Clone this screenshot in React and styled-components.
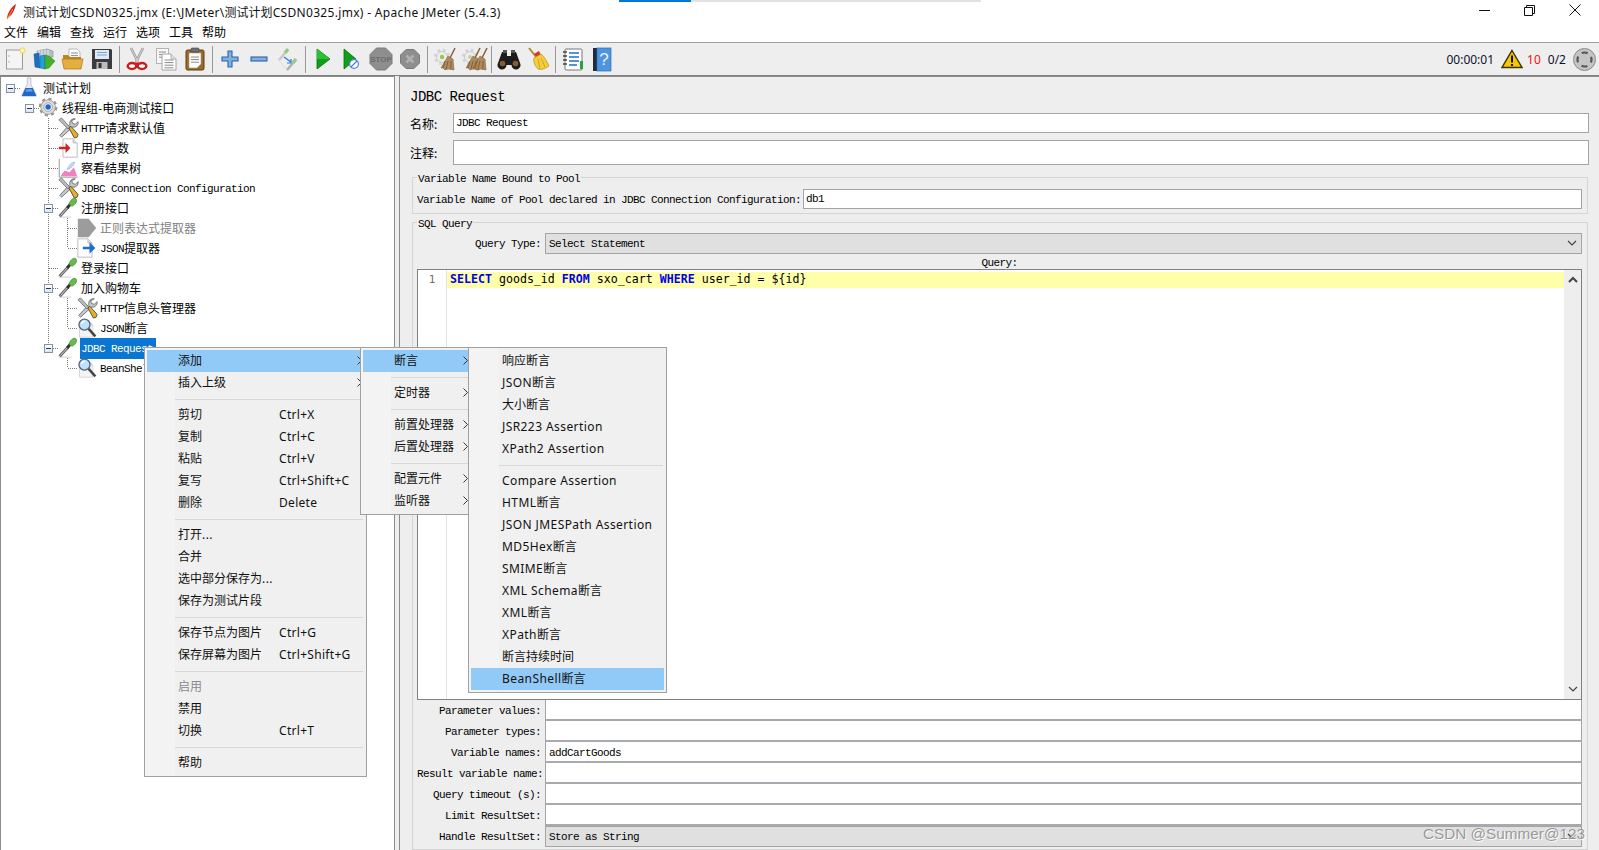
import styled, { createGlobalStyle } from 'styled-components';

const Global = createGlobalStyle`
  html, body { margin: 0; padding: 0; height: 100%; overflow: hidden; background: #fff; }
  body { font-family: "Noto Sans", "Noto Sans CJK SC", sans-serif; font-size: 12px; color: #000; }
`;

const cjk = '"Noto Sans CJK SC", "Noto Sans", sans-serif';
const ui = '"Noto Sans", "Noto Sans CJK SC", sans-serif';

const Window = styled.div`
  position: relative;
  width: 100%;
  height: 100vh;
  display: flex;
  flex-direction: column;
  overflow: hidden;
`;

const Progress = styled.div`
  position: absolute;
  left: 619px;
  top: 0;
  width: 362px;
  height: 2px;
  background: linear-gradient(to right, #0078d7 72px, #e2e2e2 72px);
`;

const TitleBar = styled.div`
  height: 21px;
  display: flex;
  align-items: center;
  padding: 2px 0 0 4px;
  box-sizing: border-box;
  font-family: ${ui};
  font-size: 12px;
  gap: 3px;
  color: #111;
`;

const WinButtons = styled.div`
  margin-left: auto;
  display: flex;
  align-items: center;
  gap: 34px;
  padding: 0 18px 3px 0;
`;

const MenuBar = styled.div`
  height: 21px;
  display: flex;
  align-items: center;
  gap: 9px;
  padding-left: 4px;
  font-family: ${cjk};
  font-size: 12px;
`;

const ToolBar = styled.div`
  height: 34px;
  box-sizing: border-box;
  display: flex;
  align-items: center;
  background: #eeeeee;
  border-top: 1px solid #a0a0a0;
  border-bottom: 1px solid #808080;
  font-family: ${ui};
`;

const ToolGroup = styled.div`
  display: flex;
  align-items: center;
  flex: none;
`;

const Tool = styled.span`
  width: 29px;
  height: 30px;
  display: flex;
  align-items: center;
  justify-content: center;
  flex: none;
`;

const ToolSep = styled.span`
  width: 1px;
  height: 27px;
  margin: 0 2.5px;
  background: #999;
  flex: none;
`;

const Status = styled.div`
  margin-left: auto;
  display: flex;
  align-items: center;
  padding-right: 3px;
  font-size: 12px;
  color: #101030;
`;

const Time = styled.span`
  margin-right: 7px;
`;

const ErrorCount = styled.span`
  color: #ee1111;
  margin: 0 7px 0 4px;
`;

const Threads = styled.span`
  margin-right: 7px;
`;

const Main = styled.div`
  flex: 1;
  display: flex;
  min-height: 0;
  background: #eeeeee;
`;

const TreePane = styled.div`
  width: 395px;
  flex: none;
  box-sizing: border-box;
  background: #fff;
  border: 1px solid #8c8c8c;
  border-bottom: none;
  padding-top: 1px;
`;

const Row = styled.div`
  height: 20px;
  display: flex;
  align-items: stretch;
`;

const dots = (dir, size, pos) =>
  `repeating-linear-gradient(${dir}, #777 0 1px, transparent 1px 2px) ${pos} / ${size} no-repeat`;

const guideBg = {
  none: 'none',
  line: dots('to bottom', '1px 100%', '9px 0'),
  tee: `${dots('to bottom', '1px 100%', '9px 0')}, ${dots('to right', '10px 1px', '10px 10px')}`,
  ell: `${dots('to bottom', '1px 10px', '9px 0')}, ${dots('to right', '10px 1px', '10px 10px')}`,
  top: dots('to right', '10px 1px', '10px 10px'),
  open: `${dots('to bottom', '1px 100%', '9px 0')}, ${dots('to right', '10px 1px', '10px 10px')}`,
};

const Guide = styled.span`
  width: 19px;
  flex: none;
  display: flex;
  align-items: center;
  justify-content: center;
  background: ${(p) => guideBg[p.$kind]};
`;

const Toggle = styled.span`
  width: 9px;
  height: 9px;
  box-sizing: border-box;
  border: 1px solid #8593a8;
  background:
    linear-gradient(#1f3a66, #1f3a66) center / 5px 1px no-repeat,
    linear-gradient(#fff, #dfe3ea);
`;

const NodeIcon = styled.span`
  width: 19px;
  flex: none;
  display: flex;
  align-items: center;
  justify-content: center;
`;

const NodeLabel = styled.span`
  margin-left: 3px;
  padding: 0 1px;
  height: 21px;
  line-height: 20px;
  font-family: ${cjk};
  font-size: 12px;
  white-space: nowrap;
  color: ${(p) => (p.$selected ? '#fff' : p.$disabled ? '#808080' : '#000')};
  background: ${(p) => (p.$selected ? '#0a76d2' : 'transparent')};
  min-width: ${(p) => (p.$selected ? '74px' : '0')};
`;

// narrow bitmap look of the Swing latin font, always 6px per char
const Sim = styled.span`
  font-family: "Liberation Mono", monospace;
  font-size: 11px;
  letter-spacing: -0.6px;
`;

const TreeSim = styled(Sim)`
  vertical-align: 1px;
`;

// the menu latin runs wider than Noto Sans
const WideLatin = styled.span`
  letter-spacing: ${(p) => p.$ls}px;
`;

const Panel = styled.div`
  flex: 1;
  min-width: 0;
  margin-left: 4px;
  box-sizing: border-box;
  border-left: 1px solid #8c8c8c;
  border-top: 1px solid #8c8c8c;
  padding: 0 10px 0 10px;
  display: flex;
  flex-direction: column;
`;

const PanelTitle = styled.div`
  height: 36px;
  padding-top: 10px;
  box-sizing: border-box;
  font-family: "Liberation Mono", monospace;
  font-size: 14px;
  letter-spacing: -0.48px;
  line-height: 20px;
`;

const NameRow = styled.div`
  display: flex;
  align-items: center;
  height: ${(p) => p.$h}px;
  margin-bottom: ${(p) => p.$mb}px;
`;

const NameLabel = styled.span`
  width: 43px;
  flex: none;
  font-family: ${cjk};
  font-size: 12px;
`;

const Field = styled.div`
  flex: 1;
  height: 100%;
  box-sizing: border-box;
  background: #fff;
  border: 1px solid #a4a4a4;
  padding: 0 2px;
  display: flex;
  align-items: center;
  min-width: 0;
`;

const Group = styled.fieldset`
  margin: ${(p) => p.$mt}px 1px 0 2px;
  padding: ${(p) => p.$pt}px 5px ${(p) => p.$pb}px 4px;
  border: 1px solid #d4d4d4;
  min-width: 0;
  display: flex;
  flex-direction: column;
  flex: ${(p) => (p.$grow ? '1' : 'none')};
  min-height: 0;
`;

const Legend = styled.legend`
  margin-left: 0;
  padding: 2px 1px 0;
  height: 16px;
  box-sizing: border-box;
  line-height: 14px;
`;

const PoolRow = styled.div`
  display: flex;
  align-items: center;
  height: 20px;
`;

const PoolLabel = styled.span`
  width: 386px;
  flex: none;
  white-space: nowrap;
  padding-bottom: 2px;
`;

const FormRow = styled.div`
  display: flex;
  height: 21px;
  flex: none;
`;

const FormLabel = styled.span`
  width: 128px;
  flex: none;
  box-sizing: border-box;
  padding-right: 4px;
  text-align: right;
  line-height: 19px;
  white-space: nowrap;
`;

const FormField = styled.div`
  flex: 1;
  box-sizing: border-box;
  background: #fff;
  border-left: 1px solid #a4a4a4;
  border-right: 1px solid #a4a4a4;
  border-bottom: 2px solid #a9a9b0;
  padding-left: 3px;
  line-height: 19px;
`;

const Combo = styled.div`
  flex: 1;
  box-sizing: border-box;
  background: #e0e0e0;
  border: 1px solid #a4a4a4;
  padding: 0 4px 0 3px;
  display: flex;
  align-items: center;
  justify-content: space-between;
`;

const QueryCaption = styled.div`
  height: 15px;
  flex: none;
  line-height: 15px;
  text-align: center;
`;

const Editor = styled.div`
  flex: 1;
  min-height: 0;
  display: flex;
  background: #fff;
  border: 1px solid #808080;
`;

const Gutter = styled.div`
  width: 29px;
  flex: none;
  box-sizing: border-box;
  border-right: 1px solid #e4e4e4;
  padding: 2px 0 0 0;
  text-align: center;
  font-family: "DejaVu Sans Mono", monospace;
  font-size: 11px;
  line-height: 16px;
  color: #7a6a60;
`;

const CodeArea = styled.div`
  flex: 1;
  min-width: 0;
  padding-top: 2px;
`;

const CodeLine = styled.div`
  height: 16px;
  background: #ffffaa;
  padding-left: 3px;
  font-family: "DejaVu Sans Mono", monospace;
  font-size: 11.62px;
  line-height: 15px;
  white-space: pre;
`;

const Keyword = styled.span`
  color: #0000ee;
  font-weight: bold;
`;

const ScrollBar = styled.div`
  width: 17px;
  flex: none;
  background: #eeeeee;
  display: flex;
  flex-direction: column;
  align-items: center;
  justify-content: space-between;
  padding: 6px 0;
  box-sizing: border-box;
`;

const Popup = styled.div`
  position: absolute;
  left: ${(p) => p.$left}px;
  top: 347px;
  width: ${(p) => p.$width}px;
  box-sizing: border-box;
  padding: 2px;
  border: 1px solid #a0a0a0;
  background: linear-gradient(to right, #f3f3f3 30px, #f0f0f0 30px);
  font-family: ${ui};
  font-size: 12px;
  color: #111;
`;

const Item = styled.div`
  height: 22px;
  box-sizing: border-box;
  padding: 0 ${(p) => p.$pr || 3}px 2px 31px;
  display: flex;
  align-items: center;
  background: ${(p) => (p.$active ? '#91c9f7' : 'transparent')};
  color: ${(p) => (p.$disabled ? '#8a8a8a' : 'inherit')};
  white-space: nowrap;
`;

const ItemText = styled.span`
  width: ${(p) => (p.$col ? `${p.$col}px` : 'auto')};
  flex: none;
`;

const Chevron = styled.svg`
  margin-left: auto;
  flex: none;
`;

const Separator = styled.div`
  height: 10px;
  margin: 0 1px 0 28px;
  background: linear-gradient(#d8d8d8, #d8d8d8) center / 100% 1px no-repeat;
`;

const Watermark = styled.div`
  position: absolute;
  left: 1423px;
  top: 825px;
  font-family: "Liberation Sans", sans-serif;
  font-size: 15.3px;
  line-height: 18px;
  color: rgba(125, 125, 125, 0.75);
  text-shadow: 1px 1px 0 rgba(255, 255, 255, 0.9);
  white-space: nowrap;
`;

const IconSvg = styled.svg`
  display: block;
  overflow: visible;
`;

const S = ({ children, w = 24, h = 24, box = '0 0 24 24' }) => (
  <IconSvg width={w} height={h} viewBox={box}>{children}</IconSvg>
);

const Page = ({ x = 4, y = 2, w = 16, h = 20, fold = 5, fill = '#fff', stroke = '#aaa' }) => (
  <g>
    <path d={`M${x} ${y}h${w - fold}l${fold} ${fold}v${h - fold}h-${w}z`} fill={fill} stroke={stroke} strokeWidth="0.9" />
    <path d={`M${x + w - fold} ${y}v${fold}h${fold}`} fill="#ddd" stroke={stroke} strokeWidth="0.7" />
  </g>
);

const DocLines = ({ x, y, w, n, step = 2.6 }) => (
  <g stroke="#8a8a8a" strokeWidth="1">
    {Array.from({ length: n }, (_, i) => (
      <line key={i} x1={x} x2={x + w} y1={y + i * step} y2={y + i * step} />
    ))}
  </g>
);

const gearTeeth = (cx, cy, r, col, w = 3.4) => (
  <g>
    <circle cx={cx} cy={cy} r={r} fill="none" stroke={col} strokeWidth={w} strokeDasharray={`${(2 * Math.PI * r) / 16} ${(2 * Math.PI * r) / 16}`} />
    <circle cx={cx} cy={cy} r={r - 1} fill="#ececec" stroke="#c4c4c4" strokeWidth="0.8" />
  </g>
);

const Broom = ({ dx = 0, straw = '#b08a5e' }) => (
  <g transform={`translate(${dx} 0)`}>
    <line x1="20" y1="1" x2="15" y2="11" stroke="#8a6238" strokeWidth="1.5" />
    <path d="M13 9l5 3 1 11-6-1-3 1-2-2-2 0z" fill={straw} stroke="#7a5630" strokeWidth="0.5" />
    <path d="M10 14l-2 7M13 14l-2 8M16 14l0 8" stroke="#6e4d2b" strokeWidth="0.7" />
  </g>
);

const toolIcons = {
  newDoc: (
    <S>
      <rect x="3.5" y="3" width="16" height="19" fill="#f4f4f4" stroke="#9a9a9a" />
      <circle cx="6" cy="9" r=".7" fill="#999" /><circle cx="6" cy="15" r=".7" fill="#999" />
      <circle cx="19.5" cy="3.5" r="2.6" fill="#fff7b0" stroke="#f0d24a" />
    </S>
  ),
  templates: (
    <S>
      <path d="M5 4l10-2 6 2v6l-14 2z" fill="#b4bcc4" stroke="#7f8a94" strokeWidth=".6" />
      <path d="M7 3v9M10 3v9M13 2.5v9M16 3v8" stroke="#eef" strokeWidth="1" />
      <path d="M2 7l5-1 1 15-5-1z" fill="#1a6fc4" stroke="#0d4c8f" strokeWidth=".5" />
      <path d="M8 9l5-1v14l-5-1z" fill="#24a0d8" stroke="#0d6c9f" strokeWidth=".5" />
      <path d="M13 8l4 1 6 5-6 7-4 1z" fill="#46b02e" stroke="#2a8018" strokeWidth=".5" />
    </S>
  ),
  open: (
    <S>
      <path d="M8 2h8l3 3v9H8z" fill="#fff" stroke="#aaa" strokeWidth=".8" />
      <DocLines x={10} y={6} w={7} n={3} />
      <path d="M2 8h5l2 2h11v5H2z" fill="#b8871f" />
      <path d="M1 12h21l-2 10H3z" fill="#e6ae3c" stroke="#a87a1c" strokeWidth=".7" />
    </S>
  ),
  save: (
    <S>
      <path d="M2 2h19l1 1v19H2z" fill="#3c3c40" />
      <rect x="5" y="3" width="14" height="9" fill="#dfe9f5" />
      <path d="M7 5.5h10M7 8h10" stroke="#7fa4cf" strokeWidth="1" />
      <rect x="6.5" y="15" width="11" height="7" fill="#bdbdbd" />
      <rect x="8.5" y="16" width="3" height="5" fill="#333" />
    </S>
  ),
  cut: (
    <S>
      <path d="M6 1l7 14M18 1l-7 14" stroke="#9a9a9a" strokeWidth="2.6" />
      <path d="M6 1l7 14M18 1l-7 14" stroke="#dcdcdc" strokeWidth=".9" />
      <ellipse cx="7" cy="19" rx="4.3" ry="3" fill="#fff" stroke="#cf1b1b" strokeWidth="2.4" />
      <ellipse cx="17" cy="19" rx="4.3" ry="3" fill="#fff" stroke="#cf1b1b" strokeWidth="2.4" />
      <path d="M10 16.5l4 0" stroke="#cf1b1b" strokeWidth="2" />
    </S>
  ),
  copy: (
    <S>
      <rect x="2.5" y="1.5" width="12" height="15" fill="#f8f8f8" stroke="#b4b4b4" />
      <DocLines x={5} y={5} w={7} n={3} />
      <path d="M8 7h9l5 5v11H8z" fill="#fff" stroke="#a4a4a4" />
      <path d="M17 7v5h5" fill="#e2e2e2" stroke="#a4a4a4" strokeWidth=".8" />
      <DocLines x={10.5} y={13} w={9} n={4} />
    </S>
  ),
  paste: (
    <S>
      <rect x="3" y="3" width="18" height="20" rx="1.5" fill="#a06a24" stroke="#5f3e12" />
      <path d="M6 6h12v11l-4 4H6z" fill="#fff" stroke="#999" strokeWidth=".6" />
      <rect x="8" y="1" width="8" height="4" rx="1" fill="#6f7074" stroke="#444" strokeWidth=".6" />
      <DocLines x={8} y={10} w={8} n={3} />
    </S>
  ),
  plus: (
    <S>
      <path d="M10 4h4v6h6v4h-6v6h-4v-6H4v-4h6z" fill="#7fb0df" stroke="#2a65a8" strokeWidth="1.1" />
    </S>
  ),
  minus: (
    <S>
      <rect x="4" y="10" width="16" height="4" fill="#7fb0df" stroke="#2a65a8" strokeWidth="1.1" />
    </S>
  ),
  toggle: (
    <S>
      <path d="M3 13l6-7" stroke="#c8c8c8" strokeWidth="2.4" />
      <path d="M9 6l3-4" stroke="#96c88c" strokeWidth="3.4" />
      <path d="M11 23l6-7" stroke="#b0b0b0" strokeWidth="2.4" />
      <path d="M17 16l3-4" stroke="#96c88c" strokeWidth="3.4" />
      <path d="M8 10l7 5" stroke="#2c7fd4" strokeWidth="1.4" />
      <path d="M15 12v4h-4" fill="none" stroke="#2c7fd4" strokeWidth="1.2" />
      <path d="M3 14l7 7" stroke="#ddd" strokeWidth="1" />
    </S>
  ),
  play: (
    <S>
      <path d="M6 2l13 10L6 22z" fill="#10a018" stroke="#0a7010" strokeWidth=".8" />
      <path d="M6 2l13 10H6z" fill="#2cc034" />
    </S>
  ),
  playNoTimer: (
    <S>
      <path d="M4 2l12 10L4 22z" fill="#10a018" stroke="#0a7010" strokeWidth=".8" />
      <circle cx="14" cy="17" r="4.4" fill="#fff" stroke="#4f7fd8" strokeWidth="1.2" />
      <path d="M11 20l6-6" stroke="#4f7fd8" strokeWidth="1.2" />
    </S>
  ),
  stop: (
    <S>
      <path d="M7.5 1h9L23 7.5v9L16.5 23h-9L1 16.5v-9z" fill="#8e8e8e" stroke="#7a7a7a" />
      <text x="12" y="15" textAnchor="middle" fontFamily="Liberation Sans" fontWeight="bold" fontSize="8" fill="#6c6c6c">STOP</text>
    </S>
  ),
  shutdown: (
    <S>
      <path d="M8 2.5h8L21.5 8v8L16 21.5H8L2.5 16V8z" fill="#8e8e8e" stroke="#7a7a7a" />
      <path d="M8.5 8.5l7 7M15.5 8.5l-7 7" stroke="#b0b0b0" strokeWidth="2.6" />
    </S>
  ),
  clear: (
    <S>
      {gearTeeth(9, 10, 6.5, '#d4d4d4')}
      <circle cx="9" cy="10" r="2.2" fill="#9cc84a" />
      <Broom dx={2} />
    </S>
  ),
  clearAll: (
    <S>
      {gearTeeth(8, 10, 6.5, '#d4d4d4')}
      <circle cx="8" cy="10" r="2" fill="#c4d4a0" />
      <Broom dx={-2} />
      <Broom dx={5} />
    </S>
  ),
  search: (
    <S>
      <path d="M5 5h5v4h4V5h5l4 11a4.5 4.5 0 1 1-8.5 2h-5A4.5 4.5 0 1 1 1 16z" fill="#1c1c1c" />
      <circle cx="5.5" cy="16.5" r="2.8" fill="#8a5a30" /><circle cx="18.5" cy="16.5" r="2.8" fill="#8a5a30" />
      <rect x="6" y="3" width="4" height="3" fill="#555" /><rect x="14" y="3" width="4" height="3" fill="#555" />
    </S>
  ),
  broom: (
    <S>
      <path d="M3 1l8 10" stroke="#b08a2c" strokeWidth="2" />
      <path d="M8 7l5-3 2 4-4 3z" fill="#d8382c" />
      <path d="M8 11l7-4c4 3 6 8 8 12-4 3-8 4-11 3-3-3-5-7-4-11z" fill="#f4cc3c" stroke="#b8901c" strokeWidth=".7" />
      <path d="M12 12l2 10M15 11l4 9" stroke="#c09a20" strokeWidth=".8" />
    </S>
  ),
  list: (
    <S>
      <rect x="4" y="2" width="17" height="21" rx="1" fill="#fff" stroke="#777" />
      <path d="M8 6h10M8 10h10M8 14h10M8 18h8" stroke="#1c6fd0" strokeWidth="1.6" />
      <path d="M2 5h4M2 9h4M2 13h4M2 17h4" stroke="#444" strokeWidth="1.3" />
      <rect x="19" y="14" width="3" height="8" fill="#2ea040" />
    </S>
  ),
  help: (
    <S>
      <rect x="3" y="1" width="6" height="23" fill="#1f2c3c" />
      <rect x="7" y="1" width="14" height="23" fill="#4f94e0" stroke="#2f6db0" strokeWidth=".7" />
      <text x="14" y="18" textAnchor="middle" fontFamily="Liberation Sans" fontSize="17" fill="#e8f2ff">?</text>
    </S>
  ),
};

const Dropper = () => (
  <S w={20} h={20}>
    <path d="M1 23l15 0" stroke="#e4e4e4" strokeWidth="2" />
    <path d="M2 22L12 11" stroke="#6a6a6a" strokeWidth="3.6" />
    <path d="M3 21l8-9" stroke="#d4d4d4" strokeWidth="1.1" />
    <path d="M11 12l5-6" stroke="#333" strokeWidth="3.4" />
    <ellipse cx="18" cy="5" rx="3.4" ry="5.4" transform="rotate(40 18 5)" fill="#6cb850" stroke="#3f8a2c" strokeWidth=".6" />
  </S>
);

const Tools = () => (
  <S w={22} h={22}>
    <path d="M20 2a5 5 0 0 0-6 6L3 20l2 2 12-11a5 5 0 0 0 6-6l-3 3-3-1-1-3z" fill="#c4c8cc" stroke="#555" strokeWidth=".8" />
    <path d="M2 3l3-2 9 10-2 2z" fill="#b8bcc0" stroke="#555" strokeWidth=".7" />
    <path d="M13 12l2-2 8 9-1 3-3 1z" fill="#e8b020" stroke="#3a3a3a" strokeWidth=".9" />
  </S>
);

const treeIcons = {
  flask: (
    <S w={22} h={22}>
      <path d="M9 1h4v7l6 12H3L9 8z" fill="#e8ecf4" stroke="#b0b6c4" strokeWidth=".8" />
      <path d="M7 12h8l4 9H3z" fill="#1f66c8" />
      <path d="M8 13h6l1 3H7z" fill="#5f9ae8" />
    </S>
  ),
  gear: (
    <S w={22} h={22}>
      <circle cx="11" cy="11" r="8.4" fill="none" stroke="#9a9a9a" strokeWidth="3.6" strokeDasharray="3.3 3.3" />
      <circle cx="11" cy="11" r="8" fill="#dadada" stroke="#8a8a8a" strokeWidth=".8" />
      <circle cx="11" cy="11" r="4.6" fill="#fff" stroke="#8a8a8a" strokeWidth=".8" />
      <circle cx="11" cy="11" r="3" fill="#1f66c8" />
    </S>
  ),
  tools: <Tools />,
  pre: (
    <S w={20} h={20} box="0 0 24 24">
      <Page x={6} y={1} w={17} h={22} />
      <path d="M1 12h9" stroke="#c62828" strokeWidth="3" />
      <path d="M9 6l6 6-6 6z" fill="#c62828" />
    </S>
  ),
  chart: (
    <S w={20} h={20} box="0 0 24 24">
      <path d="M1.5 1v22h22" fill="none" stroke="#888" strokeWidth="1" />
      <path d="M3 22l5-7 6 2 5-6 4 11z" fill="#f080c0" />
      <path d="M11 14c2-5 5-9 9-9-1 4-4 7-9 9z" fill="#c6d8f4" stroke="#7fa0d8" strokeWidth=".7" />
    </S>
  ),
  dropper: <Dropper />,
  disabledExtractor: (
    <S w={20} h={20} box="0 0 24 24">
      <path d="M1 1h13l9 11-9 11H1z" fill="#9c9c9c" />
    </S>
  ),
  post: (
    <S w={20} h={20} box="0 0 24 24">
      <Page x={1} y={1} w={17} h={22} />
      <path d="M7 12h9" stroke="#1a6fd0" strokeWidth="3" />
      <path d="M15 5l7 7-7 7z" fill="#1a6fd0" />
    </S>
  ),
  lens: (
    <S w={20} h={20} box="0 0 24 24">
      <Page x={3} y={5} w={16} h={18} fold={3} fill="#f4f4f4" stroke="#ccc" />
      <circle cx="9" cy="8" r="6.6" fill="#bfe0fa" stroke="#55657a" strokeWidth="1.6" />
      <path d="M5.5 7a4 4 0 0 1 4-3" fill="none" stroke="#fff" strokeWidth="1.4" />
      <path d="M14 13l8 9" stroke="#444" strokeWidth="3" />
    </S>
  ),
};

const splitLatin = (text) => text.split(/([\x00-\x7f]+)/).filter(Boolean);

const TreeText = ({ text }) =>
  splitLatin(text).map((part, i) =>
    /^[\x00-\x7f]/.test(part) && part !== '-' ? <TreeSim key={i}>{part}</TreeSim> : <span key={i}>{part}</span>
  );

const UiText = ({ text, ls = 0.42 }) =>
  splitLatin(text).map((part, i) =>
    /^[\x00-\x7f]/.test(part) ? <WideLatin key={i} $ls={ls}>{part}</WideLatin> : <span key={i}>{part}</span>
  );

const nodes = [
  { g: [], lead: 'top', toggle: true, icon: 'flask', text: '测试计划' },
  { g: ['none'], lead: 'top', toggle: true, icon: 'gear', text: '线程组-电商测试接口' },
  { g: ['none', 'none'], lead: 'tee', icon: 'tools', text: 'HTTP请求默认值' },
  { g: ['none', 'none'], lead: 'tee', icon: 'pre', text: '用户参数' },
  { g: ['none', 'none'], lead: 'tee', icon: 'chart', text: '察看结果树' },
  { g: ['none', 'none'], lead: 'tee', icon: 'tools', text: 'JDBC Connection Configuration' },
  { g: ['none', 'none'], lead: 'open', toggle: true, icon: 'dropper', text: '注册接口' },
  { g: ['none', 'none', 'line'], lead: 'tee', icon: 'disabledExtractor', text: '正则表达式提取器', disabled: true },
  { g: ['none', 'none', 'line'], lead: 'ell', icon: 'post', text: 'JSON提取器' },
  { g: ['none', 'none'], lead: 'tee', icon: 'dropper', text: '登录接口' },
  { g: ['none', 'none'], lead: 'open', toggle: true, icon: 'dropper', text: '加入购物车' },
  { g: ['none', 'none', 'line'], lead: 'tee', icon: 'tools', text: 'HTTP信息头管理器' },
  { g: ['none', 'none', 'line'], lead: 'ell', icon: 'lens', text: 'JSON断言' },
  { g: ['none', 'none'], lead: 'ell', toggle: true, icon: 'dropper', text: 'JDBC Request', selected: true },
  { g: ['none', 'none', 'none'], lead: 'ell', icon: 'lens', text: 'BeanShell断言' },
];

const toolGroups = [
  ['newDoc', 'templates', 'open', 'save'],
  ['cut', 'copy', 'paste'],
  ['plus', 'minus', 'toggle'],
  ['play', 'playNoTimer', 'stop', 'shutdown'],
  ['clear', 'clearAll'],
  ['search', 'broom'],
  ['list', 'help'],
];

const menuOne = [
  { t: '添加', active: true, sub: true },
  { t: '插入上级', sub: true },
  '-',
  { t: '剪切', k: 'Ctrl+X' },
  { t: '复制', k: 'Ctrl+C' },
  { t: '粘贴', k: 'Ctrl+V' },
  { t: '复写', k: 'Ctrl+Shift+C' },
  { t: '删除', k: 'Delete' },
  '-',
  { t: '打开...' },
  { t: '合并' },
  { t: '选中部分保存为...' },
  { t: '保存为测试片段' },
  '-',
  { t: '保存节点为图片', k: 'Ctrl+G' },
  { t: '保存屏幕为图片', k: 'Ctrl+Shift+G' },
  '-',
  { t: '启用', disabled: true },
  { t: '禁用' },
  { t: '切换', k: 'Ctrl+T' },
  '-',
  { t: '帮助' },
];

const menuTwo = [
  { t: '断言', active: true, sub: true },
  '-',
  { t: '定时器', sub: true },
  '-',
  { t: '前置处理器', sub: true },
  { t: '后置处理器', sub: true },
  '-',
  { t: '配置元件', sub: true },
  { t: '监听器', sub: true },
];

const menuThree = [
  { t: '响应断言' },
  { t: 'JSON断言' },
  { t: '大小断言' },
  { t: 'JSR223 Assertion' },
  { t: 'XPath2 Assertion' },
  '-',
  { t: 'Compare Assertion' },
  { t: 'HTML断言' },
  { t: 'JSON JMESPath Assertion' },
  { t: 'MD5Hex断言' },
  { t: 'SMIME断言' },
  { t: 'XML Schema断言' },
  { t: 'XML断言' },
  { t: 'XPath断言' },
  { t: '断言持续时间' },
  { t: 'BeanShell断言', active: true },
];

const MenuList = ({ items, left, width, pr, col }) => (
  <Popup $left={left} $width={width}>
    {items.map((it, i) =>
      it === '-' ? (
        <Separator key={i} />
      ) : (
        <Item key={i} $active={it.active} $disabled={it.disabled} $pr={pr}>
          <ItemText $col={col}><UiText text={it.t} /></ItemText>
          {it.k && <WideLatin $ls={0.3}>{it.k}</WideLatin>}
          {it.sub && (
            <Chevron width="5" height="9" viewBox="0 0 5 9">
              <path d="M.5.5l4 4-4 4" fill="none" stroke="#333" />
            </Chevron>
          )}
        </Item>
      )
    )}
  </Popup>
);

const formRows = [
  ['Parameter values:', ''],
  ['Parameter types:', ''],
  ['Variable names:', 'addCartGoods'],
  ['Result variable name:', ''],
  ['Query timeout (s):', ''],
  ['Limit ResultSet:', ''],
];

const Caret = ({ up, color = '#444', w = 10 }) => (
  <svg width={w} height="7" viewBox="0 0 10 7">
    <path d={up ? 'M1 6l4-4 4 4' : 'M1 1l4 4 4-4'} fill="none" stroke={color} strokeWidth={up ? 2 : 1.2} />
  </svg>
);

export default function App() {
  return (
    <Window>
      <Global />
      <Progress />
      <TitleBar>
        <svg width="16" height="17" viewBox="0 0 16 17">
          <path d="M3 16c0-5 4-12 9-15-1 5-3 10-7 13z" fill="#d8241c" />
          <path d="M3 16l6-10" stroke="#f4a01c" strokeWidth="1" />
        </svg>
        <span><UiText text="测试计划CSDN0325.jmx (E:\JMeter\测试计划CSDN0325.jmx) - Apache JMeter (5.4.3)" ls={0.32} /></span>
        <WinButtons>
          <svg width="11" height="11" viewBox="0 0 11 11"><path d="M0 5.5h11" stroke="#111" /></svg>
          <svg width="11" height="11" viewBox="0 0 11 11">
            <path d="M.5 2.5h8v8h-8zM2.5 2.5v-2h8v8h-2" fill="none" stroke="#111" />
          </svg>
          <svg width="12" height="12" viewBox="0 0 12 12"><path d="M.5.5l11 11M11.5.5l-11 11" stroke="#111" /></svg>
        </WinButtons>
      </TitleBar>
      <MenuBar>
        {['文件', '编辑', '查找', '运行', '选项', '工具', '帮助'].map((m) => <span key={m}>{m}</span>)}
      </MenuBar>
      <ToolBar>
        {toolGroups.map((group, i) => (
          <ToolGroup key={i}>
            {i > 0 && <ToolSep />}
            {group.map((name) => <Tool key={name}>{toolIcons[name]}</Tool>)}
          </ToolGroup>
        ))}
        <Status>
          <Time>00:00:01</Time>
          <svg width="22" height="20" viewBox="0 0 22 20">
            <path d="M11 1.5L21 18.5H1z" fill="#f5c800" stroke="#3c3200" strokeWidth="1.4" />
            <path d="M11 6.5v7M11 15v2" stroke="#111" strokeWidth="2" />
          </svg>
          <ErrorCount>10</ErrorCount>
          <Threads>0/2</Threads>
          <svg width="23" height="23" viewBox="0 0 23 23">
            <circle cx="11.5" cy="11.5" r="11" fill="#c4c4c4" stroke="#8a8a8a" />
            <circle cx="11.5" cy="11.5" r="7" fill="none" stroke="#555" strokeWidth="2.2" strokeDasharray="6 5" strokeDashoffset="3" />
          </svg>
        </Status>
      </ToolBar>
      <Main>
        <TreePane>
          {nodes.map((n, i) => (
            <Row key={i}>
              {n.g.map((g, j) => <Guide key={j} $kind={g} />)}
              <Guide $kind={n.lead}>{n.toggle && <Toggle />}</Guide>
              <NodeIcon>{treeIcons[n.icon]}</NodeIcon>
              <NodeLabel $selected={n.selected} $disabled={n.disabled}>
                <TreeText text={n.text} />
              </NodeLabel>
            </Row>
          ))}
        </TreePane>
        <Panel>
          <PanelTitle>JDBC Request</PanelTitle>
          <NameRow $h={20} $mb={7}>
            <NameLabel>名称:</NameLabel>
            <Field><Sim>JDBC Request</Sim></Field>
          </NameRow>
          <NameRow $h={25} $mb={0}>
            <NameLabel>注释:</NameLabel>
            <Field />
          </NameRow>
          <Group $mt={4} $pt={4} $pb={4}>
            <Legend><Sim>Variable Name Bound to Pool</Sim></Legend>
            <PoolRow>
              <PoolLabel><Sim>Variable Name of Pool declared in JDBC Connection Configuration:</Sim></PoolLabel>
              <Field><Sim>db1</Sim></Field>
            </PoolRow>
          </Group>
          <Group $mt={0} $pt={3} $pb={2} $grow>
            <Legend><Sim>SQL Query</Sim></Legend>
            <FormRow>
              <FormLabel><Sim>Query Type:</Sim></FormLabel>
              <Combo><Sim>Select Statement</Sim><Caret /></Combo>
            </FormRow>
            <QueryCaption><Sim>Query:</Sim></QueryCaption>
            <Editor>
              <Gutter>1</Gutter>
              <CodeArea>
                <CodeLine>
                  <Keyword>SELECT</Keyword> goods_id <Keyword>FROM</Keyword> sxo_cart <Keyword>WHERE</Keyword> user_id = {'${id}'}
                </CodeLine>
              </CodeArea>
              <ScrollBar><Caret up /><Caret up={false} /></ScrollBar>
            </Editor>
            {formRows.map(([label, value]) => (
              <FormRow key={label}>
                <FormLabel><Sim>{label}</Sim></FormLabel>
                <FormField><Sim>{value}</Sim></FormField>
              </FormRow>
            ))}
            <FormRow>
              <FormLabel><Sim>Handle ResultSet:</Sim></FormLabel>
              <Combo><Sim>Store as String</Sim><Caret /></Combo>
            </FormRow>
          </Group>
        </Panel>
      </Main>
      <MenuList items={menuOne} left={144} width={223} pr={2} col={101} />
      <MenuList items={menuTwo} left={360} width={120} pr={9} />
      <MenuList items={menuThree} left={468} width={199} />
      <Watermark>CSDN @Summer@123</Watermark>
    </Window>
  );
}
